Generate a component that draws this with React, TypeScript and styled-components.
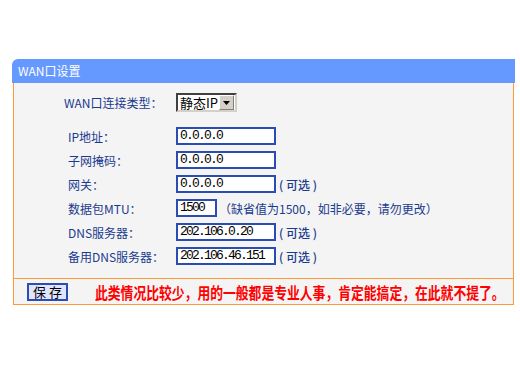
import React from "react";
import styled, { createGlobalStyle } from "styled-components";

const GlobalStyle = createGlobalStyle`
  html, body {
    margin: 0;
    padding: 0;
    background: #ffffff;
  }
  body {
    font-family: "Noto Sans CJK SC", "Noto Sans", sans-serif;
  }
`;

const fields = [
  { label: "IP地址：", value: "0.0.0.0" },
  { label: "子网掩码：", value: "0.0.0.0" },
  { label: "网关：", value: "0.0.0.0", note: "( 可选 )" },
  {
    label: "数据包MTU：",
    value: "1500",
    short: true,
    note: "（缺省值为1500，如非必要，请勿更改）",
  },
  { label: "DNS服务器：", value: "202.106.0.20", note: "( 可选 )" },
  { label: "备用DNS服务器：", value: "202.106.46.151", note: "( 可选 )" },
];

const App = () => {
  return (
    <Page>
      <GlobalStyle />
      <Panel>
        <Header>WAN口设置</Header>
        <Body>
          <TypeRow>
            <Label $indent={50}>WAN口连接类型：</Label>
            <Select>
              <SelectText>静态IP</SelectText>
              <ArrowButton>
                <svg width="7" height="4" viewBox="0 0 7 4">
                  <path d="M0 0h7L3.5 4z" fill="#000" />
                </svg>
              </ArrowButton>
            </Select>
          </TypeRow>
          <Fields>
            {fields.map((f) => (
              <Row key={f.label}>
                <Label $indent={54}>{f.label}</Label>
                <Cell>
                  <Input $short={f.short}>{f.value}</Input>
                  {f.note && <Note $wide={f.short}>{f.note}</Note>}
                </Cell>
              </Row>
            ))}
          </Fields>
        </Body>
        <Footer>
          <SaveButton>保 存</SaveButton>
          <Remark>
            <span>此类情况比较少，用的一般都是专业人事，肯定能搞定，在此就不提了。</span>
          </Remark>
        </Footer>
      </Panel>
    </Page>
  );
};

export default App;

const Page = styled.div`
  padding: 59px 0 0 12px;
`;

const Panel = styled.div`
  width: 503px;
  display: flex;
  flex-direction: column;
`;

const Header = styled.div`
  height: 24px;
  line-height: 24px;
  background: #6699ff;
  color: #ffffff;
  font-size: 12px;
  padding-left: 6px;
  border-top-left-radius: 6px;
`;

const Body = styled.div`
  margin: 0 1px;
  background: #f4f4f4;
  border-left: 1px solid #ff9933;
  border-right: 1px solid #ff9933;
  padding: 10px 0 13px;
`;

const TypeRow = styled.div`
  display: grid;
  grid-template-columns: 162px auto;
  align-items: center;
  height: 18px;
`;

const Fields = styled.div`
  display: flex;
  flex-direction: column;
  gap: 6px;
  margin-top: 16px;
`;

const Row = styled.div`
  display: grid;
  grid-template-columns: 162px auto;
  align-items: center;
  height: 18px;
`;

const Label = styled.div<{ $indent: number }>`
  padding-left: ${(p) => p.$indent}px;
  font-size: 12px;
  color: #1a3a8e;
  white-space: nowrap;
`;

const Cell = styled.div`
  display: flex;
  align-items: center;
`;

const Input = styled.div<{ $short?: boolean }>`
  box-sizing: border-box;
  width: ${(p) => (p.$short ? 41 : 100)}px;
  height: 18px;
  border: 2px solid #2b4cb2;
  background: #ffffff;
  padding-left: 2px;
  font-family: "Liberation Mono", monospace;
  font-size: 13px;
  letter-spacing: -1.8px;
  line-height: 14px;
  color: #000000;
  white-space: nowrap;
  overflow: hidden;
`;

const Note = styled.span<{ $wide?: boolean }>`
  margin-left: ${(p) => (p.$wide ? 2 : 3)}px;
  font-size: 12px;
  font-weight: ${(p) => (p.$wide ? 400 : 500)};
  color: #1a3a8e;
  white-space: nowrap;
`;

const Select = styled.div`
  box-sizing: border-box;
  width: 61px;
  height: 19px;
  display: flex;
  align-items: center;
  justify-content: space-between;
  background: #ffffff;
  border: 2px solid;
  border-color: #404040 #d4d0c8 #d4d0c8 #404040;
  padding: 0 1px 0 2px;
`;

const SelectText = styled.span`
  font-size: 13px;
  color: #000000;
  line-height: 15px;
  white-space: nowrap;
`;

const ArrowButton = styled.span`
  box-sizing: border-box;
  width: 15px;
  height: 15px;
  display: flex;
  align-items: center;
  justify-content: center;
  background: #d4d0c8;
  border: 1px solid;
  border-color: #ffffff #808080 #808080 #ffffff;
`;

const Footer = styled.div`
  margin: 0 1px;
  height: 25px;
  display: flex;
  align-items: center;
  background: #f4f4f4;
  border: 1px solid #ff9933;
  padding-left: 13px;
`;

const SaveButton = styled.button`
  box-sizing: border-box;
  width: 41px;
  height: 18px;
  padding: 0;
  background: #e0e4ff;
  border: 2px solid #2b4cb2;
  font-family: "Noto Sans CJK SC", sans-serif;
  font-size: 13px;
  line-height: 14px;
  color: #000000;
`;

const Remark = styled.div`
  margin-left: 27px;
  width: 412px;
  overflow: hidden;
  white-space: nowrap;
  span {
    display: inline-block;
    font-size: 16px;
    font-weight: 700;
    color: #ff0000;
    line-height: 20px;
    transform: scaleX(0.8);
    transform-origin: left center;
  }
`;
